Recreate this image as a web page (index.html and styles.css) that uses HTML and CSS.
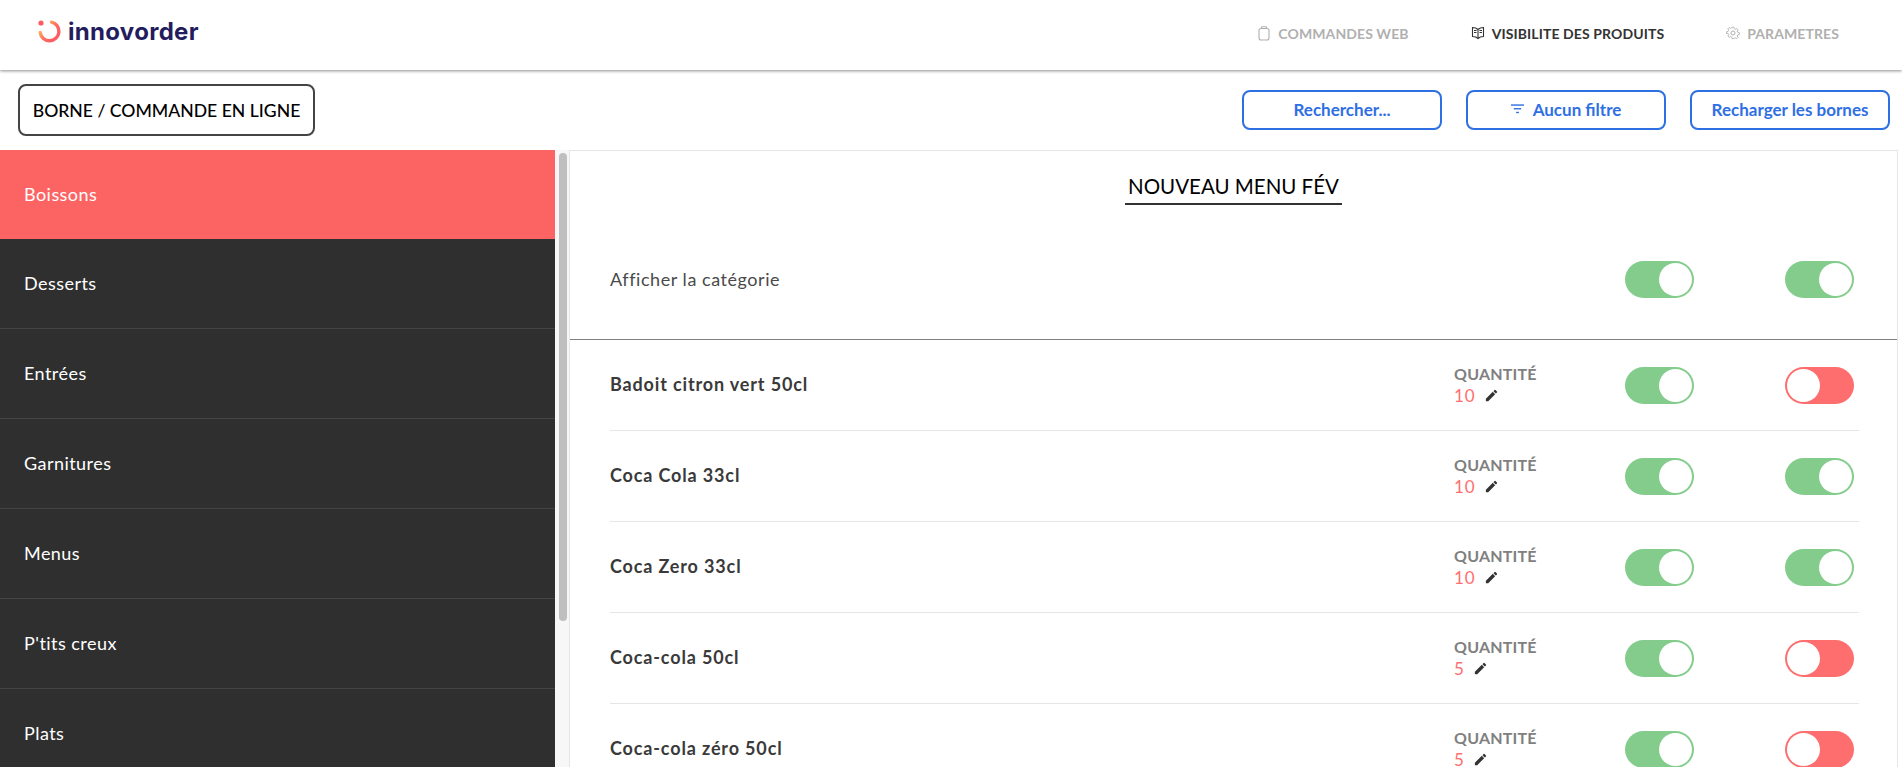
FILE: index.html
```html
<!DOCTYPE html>
<html lang="fr">

<head>
	<meta charset="UTF-8">
	<title>Innovorder - Visibilite des produits</title>
	<link rel="stylesheet" href="styles.css">
</head>

<body>
	<div class="container">
		<header class="header">
			<div class="logo">
				<svg class="logoMark" width="24" height="24" viewBox="0 0 24 24">
					<defs>
						<linearGradient id="logoGrad" x1="0" y1="0.4" x2="0.7" y2="1">
							<stop offset="0" stop-color="#fdb55c" />
							<stop offset="0.5" stop-color="#fd6e5e" />
							<stop offset="1" stop-color="#fc5c63" />
						</linearGradient>
					</defs>
					<circle cx="3" cy="3" r="2.6" fill="#fc5c63" />
					<path d="M13.500 2.200 A9.400 9.400 0 1 1 2.200 12.500" fill="none" stroke="url(#logoGrad)" stroke-width="3.400" stroke-linecap="round" />
				</svg>
				<span class="logoText">innovorder</span>
			</div>
			<nav class="nav">
				<a class="navItem">
					<svg width="14" height="15" viewBox="0 0 14 15" fill="none" stroke="currentColor" stroke-width="1.100"><rect x="2" y="2.500" width="10" height="11.500" rx="2" /><path d="M4.500 2.500V1.500q0-.8.8-.8h3.400q.8 0 .8.8v1" /></svg>
					COMMANDES WEB
				</a>
				<a class="navItem active">
					<svg width="14" height="14" viewBox="0 0 14 14" fill="none" stroke="currentColor" stroke-width="1.100"><path d="M7 3.500C5.500 2 3.500 1.500 1.500 1.500v9c2 0 4 .5 5.500 2 1.500-1.500 3.500-2 5.500-2v-9C10.500 1.500 8.500 2 7 3.500zM7 3.500v9M3 4.500h2.500M3 6.500h2.500M8.500 4.500H11M8.500 6.500H11" /></svg>
					VISIBILITE DES PRODUITS
				</a>
				<a class="navItem">
					<svg width="14" height="14" viewBox="0 0 14 14" fill="none" stroke="currentColor" stroke-width="1"><circle cx="7" cy="7" r="2" /><path d="M6 1h2l.4 1.700 1.300.6 1.500-.9 1.400 1.400-.9 1.500.6 1.300 1.700.4v2l-1.700.4-.6 1.300.9 1.500-1.400 1.400-1.500-.9-1.300.6L8 13.500H6l-.4-1.700-1.300-.6-1.500.9-1.400-1.400.9-1.500-.6-1.300L0 8V6l1.700-.4.6-1.300-.9-1.500 1.400-1.400 1.500.9 1.300-.6z" transform="translate(.6 .3) scale(.91)" /></svg>
					PARAMETRES
				</a>
			</nav>
		</header>

		<div class="toolbar">
			<button class="modeButton">BORNE / COMMANDE EN LIGNE</button>
			<div class="actions">
				<button class="actionButton">Rechercher...</button>
				<button class="actionButton">
					<svg width="13" height="10" viewBox="0 0 14 10" fill="#2f6fe4"><rect x="0" y="0" width="14" height="1.500" /><rect x="3" y="4" width="8" height="1.500" /><rect x="5.500" y="8" width="3" height="1.500" /></svg>
					Aucun filtre
				</button>
				<button class="actionButton">Recharger les bornes</button>
			</div>
		</div>

		<div class="content">
			<aside class="sidebar">
				<div class="categories">
					<div class="category selected">Boissons</div>
					<div class="category">Desserts</div>
					<div class="category">Entrées</div>
					<div class="category">Garnitures</div>
					<div class="category">Menus</div>
					<div class="category">P'tits creux</div>
					<div class="category">Plats</div>
				</div>
				<div class="scrollTrack">
					<div class="scrollThumb"></div>
				</div>
			</aside>

			<main class="panel">
				<div class="titleRow">
					<h1 class="title">NOUVEAU MENU FÉV</h1>
				</div>
				<div class="categoryRow">
					<span class="categoryLabel">Afficher la catégorie</span>
					<div class="switches">
						<span class="switch on"></span>
						<span class="switch on"></span>
					</div>
				</div>
				<div class="products">
					<div class="product">
						<span class="productName">Badoit citron vert 50cl</span>
						<div class="stock">
							<span class="stockLabel">QUANTITÉ</span>
							<span class="stockValue">10 <svg class="pencil" width="15" height="15" viewBox="0 0 24 24"><path d="M3 17.250V21h3.750L17.810 9.940l-3.750-3.750L3 17.250zM20.710 7.040a1 1 0 0 0 0-1.410l-2.340-2.340a1 1 0 0 0-1.410 0l-1.830 1.830 3.750 3.750 1.830-1.830z" /></svg></span>
						</div>
						<div class="switches">
							<span class="switch on"></span>
							<span class="switch off"></span>
						</div>
					</div>
					<div class="product">
						<span class="productName">Coca Cola 33cl</span>
						<div class="stock">
							<span class="stockLabel">QUANTITÉ</span>
							<span class="stockValue">10 <svg class="pencil" width="15" height="15" viewBox="0 0 24 24"><path d="M3 17.250V21h3.750L17.810 9.940l-3.750-3.750L3 17.250zM20.710 7.040a1 1 0 0 0 0-1.410l-2.340-2.340a1 1 0 0 0-1.410 0l-1.830 1.830 3.750 3.750 1.830-1.830z" /></svg></span>
						</div>
						<div class="switches">
							<span class="switch on"></span>
							<span class="switch on"></span>
						</div>
					</div>
					<div class="product">
						<span class="productName">Coca Zero 33cl</span>
						<div class="stock">
							<span class="stockLabel">QUANTITÉ</span>
							<span class="stockValue">10 <svg class="pencil" width="15" height="15" viewBox="0 0 24 24"><path d="M3 17.250V21h3.750L17.810 9.940l-3.750-3.750L3 17.250zM20.710 7.040a1 1 0 0 0 0-1.410l-2.340-2.340a1 1 0 0 0-1.410 0l-1.830 1.830 3.750 3.750 1.830-1.830z" /></svg></span>
						</div>
						<div class="switches">
							<span class="switch on"></span>
							<span class="switch on"></span>
						</div>
					</div>
					<div class="product">
						<span class="productName">Coca-cola 50cl</span>
						<div class="stock">
							<span class="stockLabel">QUANTITÉ</span>
							<span class="stockValue">5 <svg class="pencil" width="15" height="15" viewBox="0 0 24 24"><path d="M3 17.250V21h3.750L17.810 9.940l-3.750-3.750L3 17.250zM20.710 7.040a1 1 0 0 0 0-1.410l-2.340-2.340a1 1 0 0 0-1.410 0l-1.830 1.830 3.750 3.750 1.830-1.830z" /></svg></span>
						</div>
						<div class="switches">
							<span class="switch on"></span>
							<span class="switch off"></span>
						</div>
					</div>
					<div class="product">
						<span class="productName">Coca-cola zéro 50cl</span>
						<div class="stock">
							<span class="stockLabel">QUANTITÉ</span>
							<span class="stockValue">5 <svg class="pencil" width="15" height="15" viewBox="0 0 24 24"><path d="M3 17.250V21h3.750L17.810 9.940l-3.750-3.750L3 17.250zM20.710 7.040a1 1 0 0 0 0-1.410l-2.340-2.340a1 1 0 0 0-1.410 0l-1.830 1.830 3.750 3.750 1.830-1.830z" /></svg></span>
						</div>
						<div class="switches">
							<span class="switch on"></span>
							<span class="switch off"></span>
						</div>
					</div>
				</div>
			</main>
		</div>
	</div>
</body>

</html>
```

FILE: styles.css
```css
body,
html {
	margin: 0;
	padding: 0;
	height: 100%;
	overflow: hidden;
	background-color: #fff;
	font-family: "Lato", "Open Sans", sans-serif;
}

.container {
	height: 100%;
	display: flex;
	flex-direction: column;
}

.header {
	flex: 0 0 70px;
	display: flex;
	justify-content: space-between;
	align-items: center;
	padding: 0 63px 0 38px;
	box-sizing: border-box;
	background-color: #fff;
	box-shadow: 0 1px 3px rgba(0, 0, 0, 0.45);
	position: relative;
}

.logo {
	display: flex;
	align-items: center;
	gap: 6px;
	margin-bottom: 7px;
}

.logoText {
	font-family: "Inter", sans-serif;
	font-size: 24px;
	font-weight: 700;
	line-height: 24px;
	color: #231d5e;
	letter-spacing: 0.3px;
}

.nav {
	display: flex;
	gap: 62px;
	margin-bottom: 4px;
}

.navItem {
	display: flex;
	align-items: center;
	gap: 7px;
	font-size: 14px;
	font-weight: 700;
	letter-spacing: 0.1px;
	color: #b0b0b0;
}

.navItem.active {
	color: #333;
}

.toolbar {
	flex: 0 0 80px;
	display: flex;
	justify-content: space-between;
	align-items: center;
	padding: 0 12px 0 18px;
	box-sizing: border-box;
}

.modeButton {
	width: 297px;
	height: 52px;
	padding: 0;
	background-color: #fff;
	border: 2px solid #444;
	border-radius: 8px;
	font-family: inherit;
	font-size: 17.6px;
	font-weight: 500;
	color: #000;
}

.actions {
	display: flex;
	gap: 24px;
}

.actionButton {
	width: 200px;
	height: 40px;
	display: flex;
	justify-content: center;
	align-items: center;
	gap: 9px;
	padding: 0 0 2px;
	background-color: #fff;
	border: 2px solid #2f6fe4;
	border-radius: 8px;
	font-family: inherit;
	font-size: 17px;
	font-weight: 700;
	color: #2f6fe4;
}

.content {
	flex: 1;
	display: flex;
	min-height: 0;
}

.sidebar {
	flex: 0 0 570px;
	display: flex;
	overflow: hidden;
}

.categories {
	flex: 0 0 555px;
	background-color: #2f2f2f;
}

.category {
	height: 90px;
	display: flex;
	align-items: center;
	padding: 0 0 2px 24px;
	box-sizing: border-box;
	border-bottom: 1px solid #444;
	font-size: 18px;
	letter-spacing: 0.45px;
	color: #fff;
}

.category.selected {
	height: 89px;
	border-bottom: none;
	background-color: #fc6464;
}

.scrollTrack {
	flex: 1;
	padding: 3px 0 0 4px;
	background-color: #f7f7f7;
	border-right: 1px solid #e6e6e6;
}

.scrollThumb {
	width: 8px;
	height: 468px;
	border-radius: 4px;
	background-color: #bfbfbf;
}

.panel {
	flex: 1;
	min-width: 0;
	margin-right: 4px;
	border-top: 1px solid #e6e6e6;
	border-right: 1px solid #e6e6e6;
}

.titleRow {
	display: flex;
	justify-content: center;
	height: 54px;
}

.title {
	margin: 0;
	height: 54px;
	box-sizing: border-box;
	padding: 21px 3px 0;
	border-bottom: 2px solid #333;
	font-size: 20.5px;
	font-weight: 400;
	line-height: 28px;
	color: #000;
}

.categoryRow {
	display: flex;
	justify-content: space-between;
	align-items: center;
	height: 135px;
	padding: 14px 43px 0 40px;
	box-sizing: border-box;
	border-bottom: 1px solid #808080;
}

.categoryLabel {
	font-size: 18px;
	font-weight: 400;
	letter-spacing: 0.55px;
	color: #4a4a4a;
}

.switches {
	display: flex;
	gap: 91px;
}

.switch {
	width: 69px;
	height: 37px;
	box-sizing: border-box;
	border-radius: 19px;
	display: flex;
	align-items: center;
	padding: 2px;
}

.switch::after {
	content: "";
	width: 33px;
	height: 33px;
	border-radius: 50%;
	background-color: #fff;
}

.switch.on {
	justify-content: flex-end;
	background-color: #84cc8c;
}

.switch.off {
	justify-content: flex-start;
	background-color: #ff6e6e;
}

.products {
	margin: 0 38px 0 40px;
}

.product {
	height: 91px;
	display: flex;
	align-items: center;
	box-sizing: border-box;
	border-bottom: 1px solid #e6e6e6;
}

.product .switches {
	margin-right: 5px;
}

.productName {
	flex: 1;
	font-size: 18px;
	font-weight: 700;
	letter-spacing: 0.85px;
	color: #3a3a3a;
	margin-bottom: 3px;
}

.stock {
	flex: 0 0 171px;
	display: flex;
	flex-direction: column;
	margin-bottom: 2px;
}

.stockLabel {
	font-size: 16px;
	font-weight: 700;
	line-height: 21px;
	letter-spacing: 0.2px;
	margin-bottom: 2px;
	color: #808080;
}

.stockValue {
	font-size: 17px;
	font-weight: 400;
	line-height: 20px;
	letter-spacing: 1px;
	color: #ff6e6e;
}

.pencil {
	margin-left: 3px;
	vertical-align: -1px;
	fill: #333;
}
```
